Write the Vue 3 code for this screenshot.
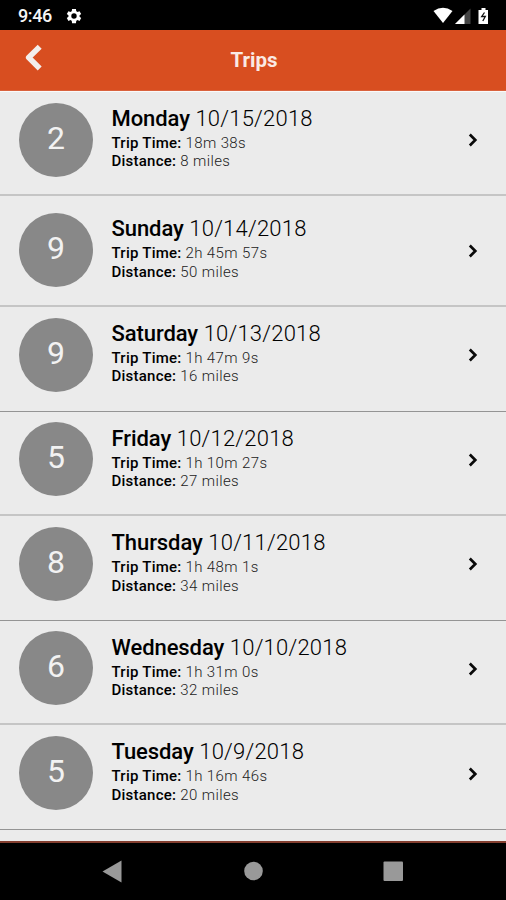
<script setup>
const trips = [
  { day: 'Monday', date: '10/15/2018', time: '18m 38s', miles: 8, count: 2, line: 'soft', place: 'first' },
  { day: 'Sunday', date: '10/14/2018', time: '2h 45m 57s', miles: 50, count: 9, line: 'soft', place: 'second' },
  { day: 'Saturday', date: '10/13/2018', time: '1h 47m 9s', miles: 16, count: 9, line: 'crisp' },
  { day: 'Friday', date: '10/12/2018', time: '1h 10m 27s', miles: 27, count: 5, line: 'soft' },
  { day: 'Thursday', date: '10/11/2018', time: '1h 48m 1s', miles: 34, count: 8, line: 'crisp' },
  { day: 'Wednesday', date: '10/10/2018', time: '1h 31m 0s', miles: 32, count: 6, line: 'soft' },
  { day: 'Tuesday', date: '10/9/2018', time: '1h 16m 46s', miles: 20, count: 5, line: 'crisp' },
]
</script>

<template>
  <div class="screen">
    <div class="status">
      <span class="clock">9:46</span>
      <svg class="gear" viewBox="0 0 24 24" width="18" height="18">
        <path fill="#fff" fill-rule="evenodd" d="M19.4 13a7.600 7.600 0 0 0 0-2l2.200-1.700-2.200-3.800-2.700 1.100a8 8 0 0 0-1.700-1L14.600 2.500H9.400L9 5.600a8 8 0 0 0-1.700 1L4.600 5.500 2.400 9.300 4.600 11a7.600 7.600 0 0 0 0 2l-2.200 1.700 2.200 3.800 2.700-1.100a8 8 0 0 0 1.700 1l.4 3.100h5.200l.4-3.100a8 8 0 0 0 1.700-1l2.700 1.100 2.200-3.800zM12 15.600a3.600 3.600 0 1 1 0-7.200 3.600 3.600 0 0 1 0 7.200z" />
      </svg>
      <svg class="signals" viewBox="0 0 58 18" width="58" height="18">
        <path fill="#fff" d="M0.500 4Q10 -2.500 19.500 4L10 16z" />
        <path fill="#444" d="M37.500 1.500V17H22z" />
        <path fill="#fff" d="M31.500 7.500V17H22z" />
        <path fill="#fff" d="M48.500 1h4v2h2.500v14h-9.500V3h3z" />
        <path fill="none" stroke="#111" stroke-width="1.300" d="M51.500 5.500 48.700 9.500h3.600L49.800 14" />
      </svg>
    </div>
    <header class="bar">
      <svg class="back" viewBox="0 0 20 30" width="20" height="30">
        <path d="M16.700 3.700 5.700 14.500l11 10.900" fill="none" stroke="#f3efed" stroke-width="5.600" stroke-linejoin="round" />
      </svg>
      <h1>Trips</h1>
    </header>
    <main class="list">
      <article v-for="trip in trips" :key="trip.date" class="trip" :class="[trip.line, trip.place]">
        <div class="count">{{ trip.count }}</div>
        <div class="details">
          <h2><b>{{ trip.day }}</b> {{ trip.date }}</h2>
          <p><b>Trip Time:</b> {{ trip.time }}</p>
          <p><b>Distance:</b> {{ trip.miles }} miles</p>
        </div>
        <svg class="chevron" viewBox="0 0 10 14" width="10" height="14">
          <path d="M1.800 1.500 7.300 7l-5.500 5.500" fill="none" stroke="#0a0a0a" stroke-width="2.700" />
        </svg>
      </article>
    </main>
    <nav class="nav">
      <svg viewBox="0 0 506 58" width="506" height="58">
        <path fill="#999" d="M102.500 28.500 121.500 17.500v22z" />
        <circle fill="#999" cx="253.500" cy="28" r="9.300" />
        <rect fill="#999" x="383.500" y="18.500" width="19.500" height="19.500" rx="1" />
      </svg>
    </nav>
  </div>
</template>

<style>
body { margin: 0; background: #000; }
</style>

<style scoped>
.screen {
  width: 506px;
  height: 900px;
  display: flex;
  flex-direction: column;
  overflow: hidden;
  background: #ebebeb;
  color: #000;
  font-family: Roboto, sans-serif;
}
.status {
  height: 30px;
  flex: none;
  box-sizing: border-box;
  padding: 1px 15px 0 18px;
  display: flex;
  align-items: center;
  background: #000;
  color: #f5f5f5;
}
.clock { font-size: 18px; font-weight: 500; line-height: 30px; letter-spacing: -0.4px; }
.gear { margin-left: 13px; }
.signals { margin-left: auto; }
.bar {
  height: 61px;
  flex: none;
  box-sizing: border-box;
  display: grid;
  grid-template-columns: 60px 1fr 60px;
  background: #d84e20;
  border-bottom: 1px solid #d9623d;
}
.back { margin: 13px 0 0 23px; }
h1 {
  margin: 0;
  padding-left: 2px;
  text-align: center;
  font-size: 20.500px;
  font-weight: 700;
  line-height: 60px;
  color: #faeae5;
}
.list { flex: 1; min-height: 0; border-top: 1px solid #fafafa; border-bottom: 2px solid #843f30; }
.trip {
  height: 104.6px;
  box-sizing: border-box;
  display: flex;
  padding: 10.600px 28px 0 19px;
}
.trip.first { height: 104px; padding-top: 10.500px; }
.trip.second { height: 111px; padding-top: 17px; }
.trip.soft { border-bottom: 2px solid #c5c5c5; }
.trip.crisp { border-bottom: 1px solid #949494; }
.count {
  width: 74px;
  height: 74px;
  flex: none;
  border-radius: 50%;
  background: #888;
  color: #f2f2f2;
  font-size: 32px;
  font-weight: 400;
  line-height: 71px;
  text-align: center;
}
.details { margin-left: 18.500px; white-space: nowrap; }
h2 {
  margin: 3.400px 0 2px;
  font-size: 22px;
  line-height: 26px;
  font-weight: 300;
  letter-spacing: 0.22px;
}
p {
  margin: 0;
  font-size: 15px;
  line-height: 18.500px;
  font-weight: 300;
  letter-spacing: 0.38px;
  color: #222;
}
b { font-weight: 500; color: #000; }
h2 b { letter-spacing: -0.08px; }
p b { letter-spacing: 0.24px; }
.chevron { margin: 30.600px 0 0 auto; }
.nav { height: 57px; flex: none; background: #000; }
.nav svg { display: block; }
</style>
